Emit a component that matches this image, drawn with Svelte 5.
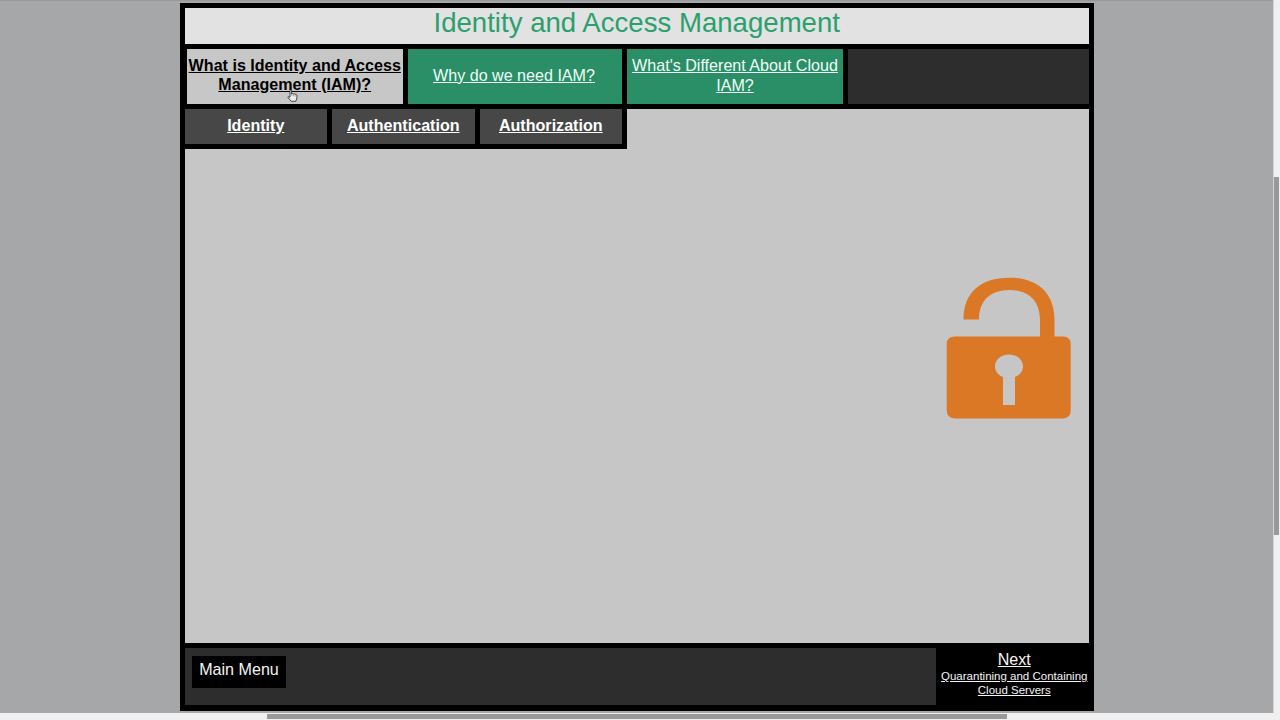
<script>
  const tabs = [
    { label: 'What is Identity and Access Management (IAM)?', kind: 'current' },
    { label: 'Why do we need IAM?', kind: 'topic single' },
    { label: "What's Different About Cloud IAM?", kind: 'topic' },
  ];
  const subtabs = ['Identity', 'Authentication', 'Authorization'];
</script>

<div class="viewport">
  <div class="page">
    <div class="frame">
      <header><h1>Identity and Access Management</h1></header>
      <nav class="tabs">
        {#each tabs as tab}
          <div class="tab {tab.kind}"><a href="#top">{tab.label}</a></div>
        {/each}
        <div class="filler"></div>
      </nav>
      <main>
        <nav class="subtabs">
          {#each subtabs as label}
            <a href="#top">{label}</a>
          {/each}
        </nav>
        <svg class="lock" width="126" height="143" viewBox="0 0 126 143">
          <path fill="#db7826" fill-rule="evenodd" d="M9 60.500H94V44C94 25 83 14 63.500 14C44 14 33 25 33 43.500H17.500C17.500 17 34 1.700 63.500 1.700C93 1.700 108.500 18 108.500 44V60.500H117Q124.700 60.500 124.700 68V134Q124.700 142.400 117 142.400H9Q.7 142.400 .7 134V68Q.7 60.500 9 60.500ZM57 101V129H69V101C74 99 77 95 77 90.500C77 83.500 71 78.400 63 78.400C55 78.400 49 83.500 49 90.500C49 95 52 99 57 101Z" />
        </svg>
      </main>
      <footer>
        <div class="bar"><button>Main Menu</button></div>
        <a class="next" href="#top"><span>Next</span><small>Quarantining and Containing Cloud Servers</small></a>
      </footer>
    </div>
  </div>
  <div class="vscroll"><i></i></div>
  <div class="hscroll"><i></i></div>
  <svg class="cursor" width="11" height="13" viewBox="0 0 11 13">
    <path fill="#eee" stroke="#222" stroke-width=".8" stroke-linejoin="round" d="M3 7.500V1.500Q3.700.4 4.600 1.500V5Q5.500 4 6.300 5Q7.300 4.300 7.900 5.300Q9.300 4.800 9.900 6.200V8.800L8.800 12.300H4.300L1 8.600Q.6 6.800 3 8.300Z" />
    <path fill="none" stroke="#777" stroke-width=".6" d="M4.700 5v2M6.400 5.200v2M8.100 5.700v2" />
  </svg>
</div>

<style>
  :global(body) { margin: 0; overflow: hidden; }
  .viewport {
    position: relative;
    box-sizing: border-box;
    width: 1280px;
    height: 720px;
    display: grid;
    grid-template-columns: 1273px 7px;
    grid-template-rows: 713px 7px;
    background: #f0f0f0;
    font-family: "Liberation Sans", Arial, sans-serif;
    font-size: 16.1px;
    line-height: 19.6px;
    overflow: hidden;
  }
  .page {
    box-sizing: border-box;
    padding: 3px 0 0 179.5px;
    background: #a6a7a9;
    box-shadow: inset 0 1px #999a9b;
  }
  .frame {
    box-sizing: border-box;
    width: 914.5px;
    height: 707.5px;
    padding: 5px;
    background: #000;
    display: grid;
    grid-template-rows: 36px 55px 534px 57px;
    row-gap: 5px;
  }
  header { background: #e2e2e2; text-align: center; }
  h1 {
    margin: 0;
    font-weight: 400;
    font-size: 27.6px;
    line-height: 29px;
    color: #29a06e;
  }
  .tabs {
    display: grid;
    grid-template-columns: 216.5px 214px 216px 1fr;
    column-gap: 5px;
    padding-left: 2px;
  }
  .tab {
    display: flex;
    align-items: center;
    justify-content: center;
    text-align: center;
    padding-bottom: 2px;
  }
  .tab a { color: inherit; }
  .topic { background: #2a8e66; color: #f0fff8; }
  .single { padding-right: 2px; }
  .current {
    background: #c7c7c7;
    color: #000;
    font-weight: 700;
    line-height: 19px;
    padding-bottom: 3px;
  }
  .filler { background: #2d2d2d; }
  main {
    background: #c6c6c6;
    display: flex;
    flex-direction: column;
    align-items: flex-start;
  }
  .subtabs {
    display: grid;
    grid-template-columns: 142.5px 142.5px 142.5px;
    gap: 5px;
    padding: 0 5px 5px 0;
    background: #000;
  }
  .subtabs a {
    height: 35px;
    line-height: 32px;
    background: #474747;
    color: #fff;
    font-weight: 700;
    text-align: center;
  }
  .lock { align-self: flex-end; margin: 127px 17px 0 0; }
  footer { display: grid; grid-template-columns: 751px 1fr; }
  .bar { background: #2d2d2d; padding: 7.5px 7px; }
  button {
    display: block;
    width: 94px;
    height: 32px;
    padding: 0 0 3px 1px;
    border: 0;
    background: #000;
    color: #f4f4f4;
    font: inherit;
  }
  .next { color: #f4f4f4; text-align: center; padding: 1px 0 0 2px; margin-right: -2px; }
  .next span { display: block; line-height: 20px; }
  small { display: block; padding-top: 1px; font-size: 11.5px; line-height: 13.6px; }
  .vscroll { border-left: 1px solid #d4d4d4; box-sizing: border-box; }
  .vscroll i {
    display: block;
    width: 5px;
    height: 358px;
    margin-top: 177px;
    background: #999;
  }
  .hscroll { padding: 1px 0 0 266.5px; }
  .hscroll i { display: block; width: 740px; height: 5px; background: #999; }
  .cursor { position: absolute; left: 287px; top: 89px; }
</style>
